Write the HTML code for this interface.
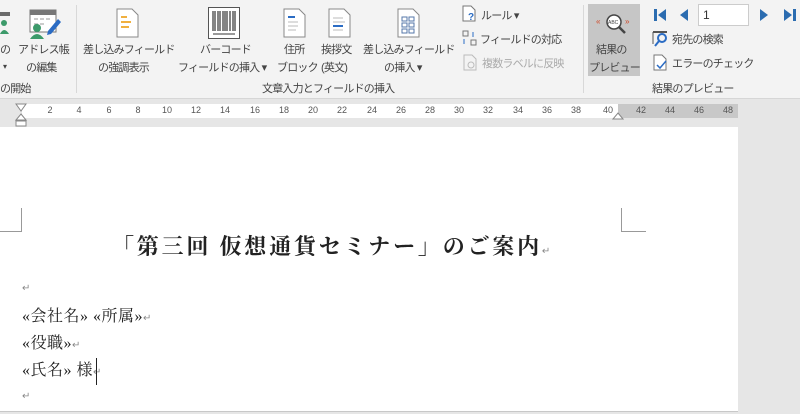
<!DOCTYPE html>
<html><head><meta charset="utf-8"><style>
*{margin:0;padding:0;box-sizing:border-box}
body{width:800px;height:414px;overflow:hidden;background:#e6e6e6;font-family:"Liberation Sans","Noto Sans CJK JP",sans-serif;position:relative}
.rib{position:absolute;left:0;top:0;width:800px;height:99px;background:#f3f3f3;border-bottom:1px solid #d6d6d6}
.t{position:absolute;font-size:11px;letter-spacing:-0.8px;color:#444;white-space:nowrap;line-height:14px}
.g{color:#aaa}
.sep{position:absolute;top:5px;width:1px;height:88px;background:#d8d8d8}
.doc{position:absolute;font-family:"Liberation Serif","Noto Serif CJK JP",serif;color:#222;white-space:nowrap}
.rm{color:#888;font-size:10px;letter-spacing:0}
.n{position:absolute;top:105px;font-size:9px;color:#555;transform:translateX(-50%)}
</style></head><body>
<div class="rib">
 <svg style="position:absolute;left:0;top:10px" width="12" height="28"><rect x="0" y="2" width="10" height="4" fill="#6a6a6a"/><circle cx="4" cy="13" r="3" fill="#3c9a6a"/><path d="M0 24 q4-8 9 0z" fill="#3c9a6a"/></svg>
 <div class="t" style="left:0;top:43px">の</div>
 <div class="t" style="left:3px;top:60px;font-size:8px">▾</div>
 <svg style="position:absolute;left:28px;top:9px" width="34" height="30"><rect x="2" y="1" width="26" height="22" fill="#fff" stroke="#777"/><rect x="2" y="1" width="26" height="5" fill="#777"/><path d="M6 10h4M12 10h4M18 10h4M6 15h4M12 15h4" stroke="#999"/><circle cx="9" cy="19" r="4" fill="#3c9a6a"/><path d="M2 30 q7-10 14 0z" fill="#3c9a6a"/><path d="M20 22l10-12 3 3-10 12-4 1z" fill="#2b6cc4"/></svg>
 <div class="t" style="left:18px;top:43px">アドレス帳</div>
 <div class="t" style="left:26px;top:61px">の編集</div>
 <div class="t" style="left:0;top:82px">の開始</div>
 <div class="sep" style="left:76px"></div>

 <svg style="position:absolute;left:116px;top:8px" width="24" height="30"><path d="M1 1h15l6 6v22H1z" fill="#fff" stroke="#888"/><path d="M5 9h6M5 14h10M5 19h8" stroke="#f0b040" stroke-width="2"/></svg>
 <div class="t" style="left:83px;top:43px">差し込みフィールド</div>
 <div class="t" style="left:98px;top:61px">の強調表示</div>

 <svg style="position:absolute;left:208px;top:7px" width="32" height="32"><rect x="0.5" y="0.5" width="31" height="31" fill="#fff" stroke="#555"/><path d="M5 4v20M7 4v20M10 4v20M12 4v20M15 4v20M17 4v20M19 4v20M22 4v20M25 4v20M27 4v20" stroke="#333" stroke-width="1.2"/><path d="M5 27h22" stroke="#999" stroke-width="2"/></svg>
 <div class="t" style="left:200px;top:43px">バーコード</div>
 <div class="t" style="left:178px;top:61px">フィールドの挿入 ▾</div>

 <svg style="position:absolute;left:283px;top:8px" width="24" height="30"><path d="M1 1h15l6 6v22H1z" fill="#fff" stroke="#888"/><path d="M5 9h7" stroke="#2b6cc4" stroke-width="2"/><path d="M5 14h10M5 18h10M5 22h8" stroke="#bbb"/></svg>
 <div class="t" style="left:284px;top:43px">住所</div>
 <div class="t" style="left:277px;top:61px">ブロック</div>

 <svg style="position:absolute;left:328px;top:8px" width="24" height="30"><path d="M1 1h15l6 6v22H1z" fill="#fff" stroke="#888"/><path d="M5 10h10M5 14h12M5 22h10" stroke="#bbb"/><path d="M5 18h10" stroke="#2b6cc4" stroke-width="2"/></svg>
 <div class="t" style="left:321px;top:43px">挨拶文</div>
 <div class="t" style="left:321px;top:61px">(英文)</div>

 <svg style="position:absolute;left:397px;top:8px" width="24" height="30"><path d="M1 1h15l6 6v22H1z" fill="#fff" stroke="#888"/><path d="M5 9h5v4H5zM12 9h5v4h-5zM5 15h5v4H5zM12 15h5v4h-5zM5 21h5v4H5zM12 21h5v4h-5z" fill="none" stroke="#5577aa"/></svg>
 <div class="t" style="left:363px;top:43px">差し込みフィールド</div>
 <div class="t" style="left:384px;top:61px">の挿入 ▾</div>

 <svg style="position:absolute;left:462px;top:5px" width="16" height="18"><path d="M1 1h8l4 4v11H1z" fill="#fff" stroke="#777"/><text x="6" y="15" font-size="10" font-weight="bold" fill="#2b6cc4" font-family="Liberation Sans">?</text></svg>
 <div class="t" style="left:481px;top:9px">ルール ▾</div>
 <svg style="position:absolute;left:462px;top:30px" width="16" height="18"><rect x="1" y="1" width="5" height="5" fill="none" stroke="#777"/><rect x="9" y="10" width="5" height="5" fill="none" stroke="#777"/><path d="M11 2v5M2 9v5" stroke="#2b6cc4"/></svg>
 <div class="t" style="left:480px;top:33px">フィールドの対応</div>
 <svg style="position:absolute;left:463px;top:54px" width="16" height="18"><path d="M1 1h8l4 4v11H1z" fill="none" stroke="#bbb"/><circle cx="8" cy="11" r="3" fill="none" stroke="#bbb"/></svg>
 <div class="t g" style="left:482px;top:57px">複数ラベルに反映</div>
 <div class="t" style="left:262px;top:82px">文章入力とフィールドの挿入</div>
 <div class="sep" style="left:583px"></div>

 <div style="position:absolute;left:588px;top:4px;width:52px;height:72px;background:#c6c6c6"></div>
 <svg style="position:absolute;left:596px;top:12px" width="38" height="26"><text x="0" y="12" font-size="8" fill="#d04a2a" font-family="Liberation Sans">«</text><text x="29" y="12" font-size="8" fill="#d04a2a" font-family="Liberation Sans">»</text><circle cx="18" cy="10" r="7" fill="#fff" stroke="#444" stroke-width="1.5"/><text x="12" y="12" font-size="5" fill="#444" font-family="Liberation Sans">ABC</text><path d="M23 15l6 6" stroke="#444" stroke-width="2.5"/></svg>
 <div class="t" style="left:596px;top:43px">結果の</div>
 <div class="t" style="left:589px;top:61px">プレビュー</div>

 <svg style="position:absolute;left:652px;top:7px" width="150" height="18"><path d="M2 2h3v12H2zM14 2v12l-8-6z" fill="#2b6cb0"/><path d="M36 2v12l-8-6z" fill="#2b6cb0"/><path d="M108 2v12l8-6z" fill="#2b6cb0"/><path d="M132 2v12l8-6zM141 2h3v12h-3z" fill="#2b6cb0"/></svg>
 <div style="position:absolute;left:698px;top:4px;width:51px;height:22px;background:#fff;border:1px solid #ccc;font-size:12px;padding:3px 4px;color:#333">1</div>
 <svg style="position:absolute;left:652px;top:30px" width="18" height="18"><path d="M1 2h14" stroke="#555" stroke-width="2"/><path d="M1 2v12" stroke="#555"/><circle cx="10" cy="8" r="4" fill="none" stroke="#2b6cc4" stroke-width="2"/><path d="M7 11l-4 5" stroke="#2b6cc4" stroke-width="2"/></svg>
 <div class="t" style="left:672px;top:33px">宛先の検索</div>
 <svg style="position:absolute;left:653px;top:54px" width="16" height="18"><path d="M1 1h8l4 4v11H1z" fill="#fff" stroke="#777"/><path d="M4 11l3 3 6-7" stroke="#2b6cc4" stroke-width="1.5" fill="none"/></svg>
 <div class="t" style="left:672px;top:57px">エラーのチェック</div>
 <div class="t" style="left:652px;top:82px">結果のプレビュー</div>
</div>

<div style="position:absolute;left:22px;top:104px;width:596px;height:14px;background:#fff"></div>
<div style="position:absolute;left:618px;top:104px;width:120px;height:14px;background:#c8c8c8"></div>
<div class="n" style="left:50px">2</div><div class="n" style="left:79px">4</div><div class="n" style="left:109px">6</div><div class="n" style="left:138px">8</div><div class="n" style="left:167px">10</div><div class="n" style="left:196px">12</div><div class="n" style="left:225px">14</div><div class="n" style="left:255px">16</div><div class="n" style="left:284px">18</div><div class="n" style="left:313px">20</div><div class="n" style="left:342px">22</div><div class="n" style="left:372px">24</div><div class="n" style="left:401px">26</div><div class="n" style="left:430px">28</div><div class="n" style="left:459px">30</div><div class="n" style="left:488px">32</div><div class="n" style="left:518px">34</div><div class="n" style="left:547px">36</div><div class="n" style="left:576px">38</div><div class="n" style="left:608px">40</div><div class="n" style="left:641px">42</div><div class="n" style="left:670px">44</div><div class="n" style="left:699px">46</div><div class="n" style="left:728px">48</div>
<svg style="position:absolute;left:15px;top:103px" width="14" height="24"><path d="M1 1h10L6 8z" fill="#fff" stroke="#888"/><path d="M6 11l5 6H1z" fill="#fff" stroke="#888"/><rect x="1" y="18" width="10" height="5" fill="#fff" stroke="#888"/></svg>
<svg style="position:absolute;left:612px;top:112px" width="12" height="8"><path d="M6 1l5 6H1z" fill="#fff" stroke="#888"/></svg>

<div style="position:absolute;left:0;top:127px;width:738px;height:285px;background:#fff;border-bottom:1px solid #c8c8c8"></div>
<div style="position:absolute;left:21px;top:208px;width:1px;height:24px;background:#999"></div>
<div style="position:absolute;left:0;top:231px;width:22px;height:1px;background:#999"></div>
<div style="position:absolute;left:621px;top:208px;width:1px;height:24px;background:#999"></div>
<div style="position:absolute;left:621px;top:231px;width:25px;height:1px;background:#999"></div>

<div class="doc" style="left:112px;top:232px;font-size:22px;line-height:30px;font-weight:bold;letter-spacing:2.8px">「第三回&nbsp;仮想通貨セミナー」のご案内<span class="rm" style="font-weight:normal">↵</span></div>
<div class="doc rm" style="left:22px;top:283px">↵</div>
<div class="doc" style="left:22px;top:307px;font-size:16px;line-height:20px;letter-spacing:0.5px">«会社名» «所属»<span class="rm">↵</span></div>
<div class="doc" style="left:22px;top:334px;font-size:16px;line-height:20px;letter-spacing:0.5px">«役職»<span class="rm">↵</span></div>
<div class="doc" style="left:22px;top:361px;font-size:16px;line-height:20px;letter-spacing:0.5px">«氏名» 様<span class="rm">↵</span></div>
<div style="position:absolute;left:96px;top:358px;width:1px;height:27px;background:#222"></div>
<div class="doc rm" style="left:22px;top:391px">↵</div>
</body></html>
